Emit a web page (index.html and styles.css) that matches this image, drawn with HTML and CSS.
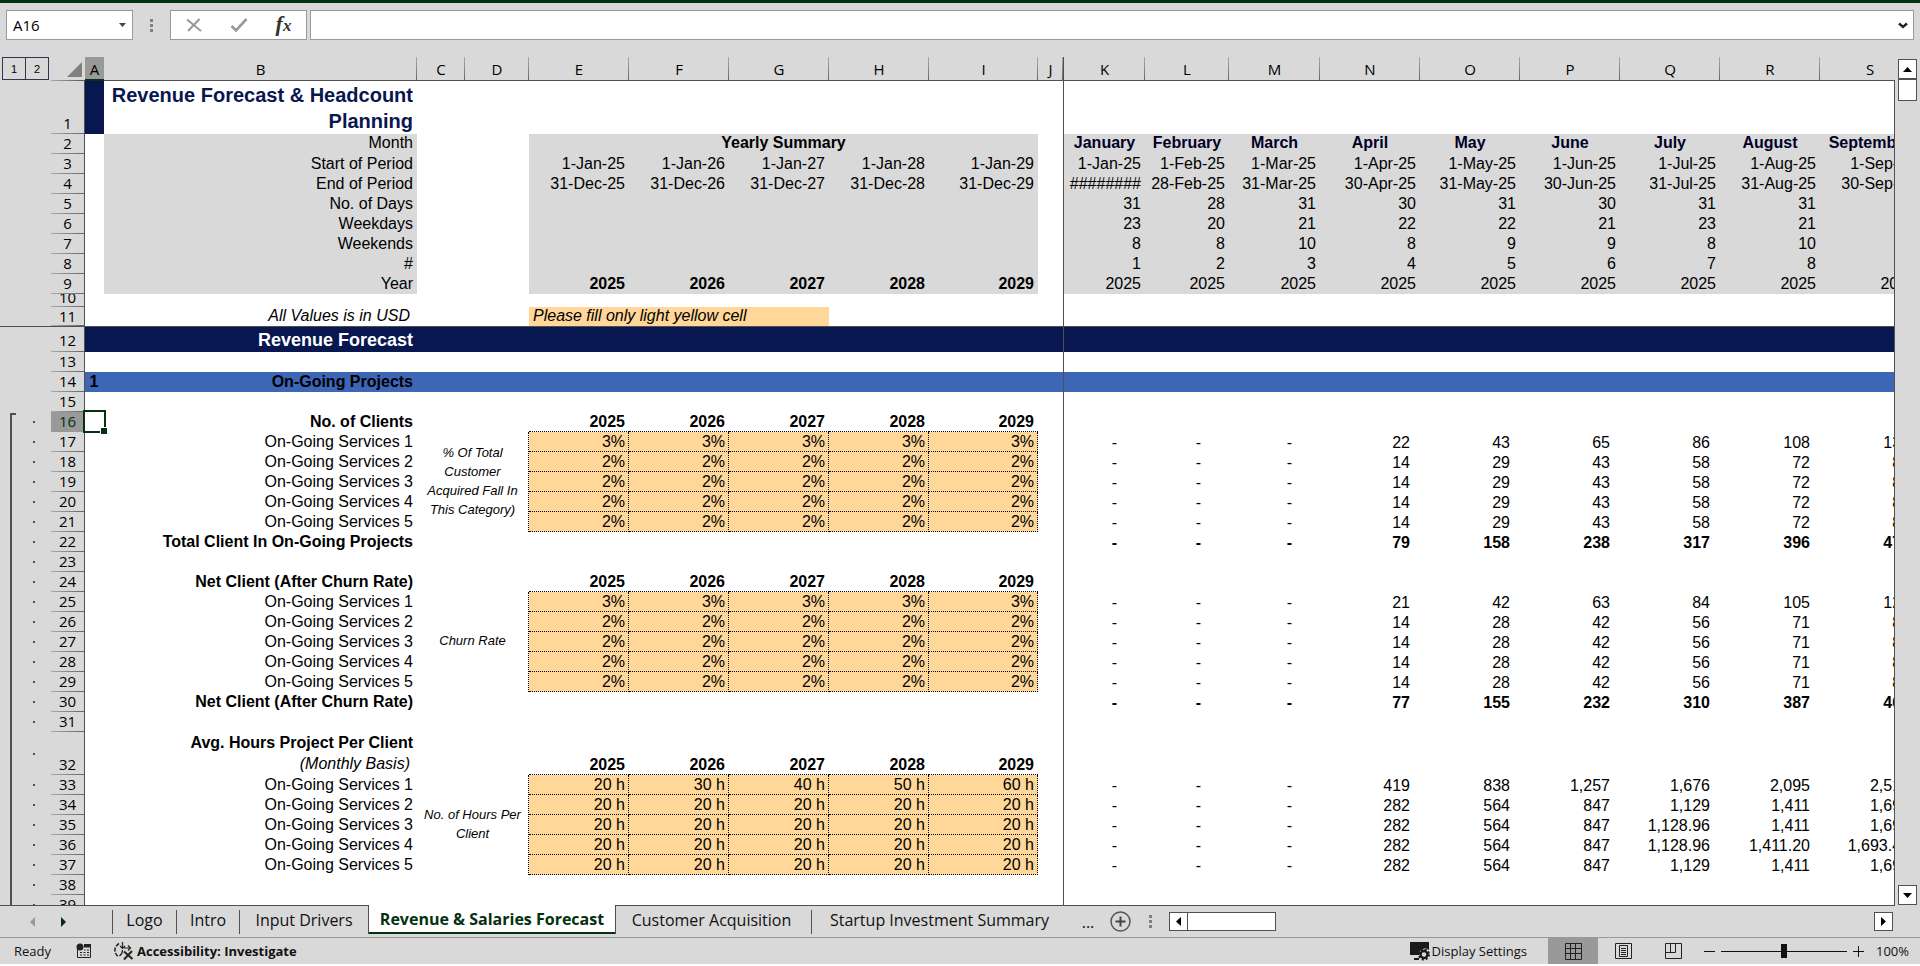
FILE: index.html
```html
<!DOCTYPE html>
<html lang="en">
<head>
<meta charset="utf-8">
<title>Revenue Forecast &amp; Headcount Planning</title>
<link rel="stylesheet" href="styles.css">
</head>
<body>
<div class="titlebar"></div>

<header class="formula-bar">
  <div class="name-box">
    <input type="text" value="A16" aria-label="Name box">
    <button type="button" aria-label="Name list"><svg width="7" height="4"><path d="M0 0h7L3.500 4z" fill="#444"/></svg></button>
  </div>
  <span class="grip"><i></i><i></i><i></i></span>
  <div class="fx-box">
    <button type="button" aria-label="Cancel"><svg width="16" height="14" viewBox="0 0 16 14"><path d="M1 1.500L15 13M13.500 1L2 13" fill="none" stroke="#999" stroke-width="2"/></svg></button>
    <button type="button" aria-label="Enter"><svg width="18" height="14" viewBox="0 0 18 14"><path d="M1.500 8L6 12.500 16.500 1" fill="none" stroke="#999" stroke-width="2.600"/></svg></button>
    <button type="button" class="fx" aria-label="Insert function">f<span>x</span></button>
  </div>
  <div class="formula">
    <input type="text" aria-label="Formula">
    <button type="button" aria-label="Expand formula bar"><svg width="10" height="7" viewBox="0 0 10 7"><path d="M1 1.500L5 5 9 1.500" fill="none" stroke="#222" stroke-width="2.400"/></svg></button>
  </div>
</header>

<main class="workspace">
<div class="grid">
<table class="sheet">
<colgroup>
<col class="w-outline"><col class="w-rownum"><col class="w-a"><col class="w-b"><col class="w-c"><col class="w-d">
<col class="w-std"><col class="w-std"><col class="w-std"><col class="w-std"><col class="w-i"><col class="w-j">
<col class="w-k"><col class="w-l"><col class="w-m"><col class="w-std"><col class="w-std"><col class="w-std"><col class="w-std"><col class="w-std"><col class="w-std">
</colgroup>
<thead>
<tr>
<td class="levels"><div><button type="button">1</button><button type="button">2</button></div></td>
<td class="corner"><svg width="15" height="15"><path d="M15 0v15H0z" fill="#808080"/></svg></td>
<th scope="col" class="current">A</th><th scope="col">B</th><th scope="col">C</th><th scope="col">D</th><th scope="col">E</th><th scope="col">F</th><th scope="col">G</th><th scope="col">H</th><th scope="col">I</th><th scope="col" class="fz">J</th><th scope="col">K</th><th scope="col">L</th><th scope="col">M</th><th scope="col">N</th><th scope="col">O</th><th scope="col">P</th><th scope="col">Q</th><th scope="col">R</th><th scope="col">S</th>
</tr>
</thead>

<tbody class="frozen">
<tr class="title"><td></td><th scope="row">1</th><td class="navy"></td><td>Revenue Forecast &amp; Headcount Planning</td><td colspan="8" class="fz"></td><td colspan="9"></td></tr>
<tr class="meta months"><td></td><th scope="row">2</th><td></td><td>Month</td><td colspan="2"></td><td colspan="5" class="summary">Yearly Summary</td><td class="fz"></td><td>January</td><td>February</td><td>March</td><td>April</td><td>May</td><td>June</td><td>July</td><td>August</td><td>September</td></tr>
<tr class="meta"><td></td><th scope="row">3</th><td></td><td>Start of Period</td><td colspan="2"></td><td>1-Jan-25</td><td>1-Jan-26</td><td>1-Jan-27</td><td>1-Jan-28</td><td>1-Jan-29</td><td class="fz"></td><td>1-Jan-25</td><td>1-Feb-25</td><td>1-Mar-25</td><td>1-Apr-25</td><td>1-May-25</td><td>1-Jun-25</td><td>1-Jul-25</td><td>1-Aug-25</td><td>1-Sep-25</td></tr>
<tr class="meta"><td></td><th scope="row">4</th><td></td><td>End of Period</td><td colspan="2"></td><td>31-Dec-25</td><td>31-Dec-26</td><td>31-Dec-27</td><td>31-Dec-28</td><td>31-Dec-29</td><td class="fz"></td><td>########</td><td>28-Feb-25</td><td>31-Mar-25</td><td>30-Apr-25</td><td>31-May-25</td><td>30-Jun-25</td><td>31-Jul-25</td><td>31-Aug-25</td><td>30-Sep-25</td></tr>
<tr class="meta"><td></td><th scope="row">5</th><td></td><td>No. of Days</td><td colspan="2"></td><td></td><td></td><td></td><td></td><td></td><td class="fz"></td><td>31</td><td>28</td><td>31</td><td>30</td><td>31</td><td>30</td><td>31</td><td>31</td><td></td></tr>
<tr class="meta"><td></td><th scope="row">6</th><td></td><td>Weekdays</td><td colspan="2"></td><td></td><td></td><td></td><td></td><td></td><td class="fz"></td><td>23</td><td>20</td><td>21</td><td>22</td><td>22</td><td>21</td><td>23</td><td>21</td><td></td></tr>
<tr class="meta"><td></td><th scope="row">7</th><td></td><td>Weekends</td><td colspan="2"></td><td></td><td></td><td></td><td></td><td></td><td class="fz"></td><td>8</td><td>8</td><td>10</td><td>8</td><td>9</td><td>9</td><td>8</td><td>10</td><td></td></tr>
<tr class="meta"><td></td><th scope="row">8</th><td></td><td>#</td><td colspan="2"></td><td></td><td></td><td></td><td></td><td></td><td class="fz"></td><td>1</td><td>2</td><td>3</td><td>4</td><td>5</td><td>6</td><td>7</td><td>8</td><td></td></tr>
<tr class="meta year"><td></td><th scope="row">9</th><td></td><td>Year</td><td colspan="2"></td><td>2025</td><td>2026</td><td>2027</td><td>2028</td><td>2029</td><td class="fz"></td><td>2025</td><td>2025</td><td>2025</td><td>2025</td><td>2025</td><td>2025</td><td>2025</td><td>2025</td><td>2025</td></tr>
<tr class="thin"><td></td><th scope="row"><span>10</span></th><td></td><td colspan="9" class="fz"></td><td colspan="9"></td></tr>
<tr class="notice"><td></td><th scope="row">11</th><td></td><td class="italic">All Values is in USD</td><td colspan="2"></td><td colspan="3" class="hint">Please fill only light yellow cell</td><td colspan="3" class="fz"></td><td colspan="9"></td></tr>
</tbody>

<tbody>
<tr class="section"><td></td><th scope="row">12</th><td></td><td>Revenue Forecast</td><td colspan="8" class="fz"></td><td colspan="9"></td></tr>
<tr><td></td><th scope="row">13</th><td></td><td colspan="9" class="fz"></td><td colspan="9"></td></tr>
<tr class="subsection"><td></td><th scope="row">14</th><td>1</td><td>On-Going Projects</td><td colspan="8" class="fz"></td><td colspan="9"></td></tr>
<tr><td></td><th scope="row">15</th><td></td><td colspan="9" class="fz"></td><td colspan="9"></td></tr>
</tbody>

<tbody class="grouped">
<tr class="years first"><td></td><th scope="row" class="current">16</th><td class="selected"><i></i></td><td>No. of Clients</td><td colspan="2"></td><td>2025</td><td>2026</td><td>2027</td><td>2028</td><td>2029</td><td class="fz"></td><td colspan="9"></td></tr>
<tr class="data"><td></td><th scope="row">17</th><td></td><td>On-Going Services 1</td><td class="note" colspan="2" rowspan="5">% Of Total Customer Acquired Fall In This Category)</td><td>3%</td><td>3%</td><td>3%</td><td>3%</td><td>3%</td><td class="fz"></td><td>-</td><td>-</td><td>-</td><td>22</td><td>43</td><td>65</td><td>86</td><td>108</td><td>130</td></tr>
<tr class="data"><td></td><th scope="row">18</th><td></td><td>On-Going Services 2</td><td>2%</td><td>2%</td><td>2%</td><td>2%</td><td>2%</td><td class="fz"></td><td>-</td><td>-</td><td>-</td><td>14</td><td>29</td><td>43</td><td>58</td><td>72</td><td>86</td></tr>
<tr class="data"><td></td><th scope="row">19</th><td></td><td>On-Going Services 3</td><td>2%</td><td>2%</td><td>2%</td><td>2%</td><td>2%</td><td class="fz"></td><td>-</td><td>-</td><td>-</td><td>14</td><td>29</td><td>43</td><td>58</td><td>72</td><td>86</td></tr>
<tr class="data"><td></td><th scope="row">20</th><td></td><td>On-Going Services 4</td><td>2%</td><td>2%</td><td>2%</td><td>2%</td><td>2%</td><td class="fz"></td><td>-</td><td>-</td><td>-</td><td>14</td><td>29</td><td>43</td><td>58</td><td>72</td><td>86</td></tr>
<tr class="data"><td></td><th scope="row">21</th><td></td><td>On-Going Services 5</td><td>2%</td><td>2%</td><td>2%</td><td>2%</td><td>2%</td><td class="fz"></td><td>-</td><td>-</td><td>-</td><td>14</td><td>29</td><td>43</td><td>58</td><td>72</td><td>86</td></tr>
<tr class="total"><td></td><th scope="row">22</th><td></td><td>Total Client In On-Going Projects</td><td colspan="8" class="fz"></td><td>-</td><td>-</td><td>-</td><td>79</td><td>158</td><td>238</td><td>317</td><td>396</td><td>475</td></tr>
<tr><td></td><th scope="row">23</th><td></td><td colspan="9" class="fz"></td><td colspan="9"></td></tr>
<tr class="years"><td></td><th scope="row">24</th><td></td><td>Net Client (After Churn Rate)</td><td colspan="2"></td><td>2025</td><td>2026</td><td>2027</td><td>2028</td><td>2029</td><td class="fz"></td><td colspan="9"></td></tr>
<tr class="data"><td></td><th scope="row">25</th><td></td><td>On-Going Services 1</td><td class="note" colspan="2" rowspan="5">Churn Rate</td><td>3%</td><td>3%</td><td>3%</td><td>3%</td><td>3%</td><td class="fz"></td><td>-</td><td>-</td><td>-</td><td>21</td><td>42</td><td>63</td><td>84</td><td>105</td><td>126</td></tr>
<tr class="data"><td></td><th scope="row">26</th><td></td><td>On-Going Services 2</td><td>2%</td><td>2%</td><td>2%</td><td>2%</td><td>2%</td><td class="fz"></td><td>-</td><td>-</td><td>-</td><td>14</td><td>28</td><td>42</td><td>56</td><td>71</td><td>85</td></tr>
<tr class="data"><td></td><th scope="row">27</th><td></td><td>On-Going Services 3</td><td>2%</td><td>2%</td><td>2%</td><td>2%</td><td>2%</td><td class="fz"></td><td>-</td><td>-</td><td>-</td><td>14</td><td>28</td><td>42</td><td>56</td><td>71</td><td>85</td></tr>
<tr class="data"><td></td><th scope="row">28</th><td></td><td>On-Going Services 4</td><td>2%</td><td>2%</td><td>2%</td><td>2%</td><td>2%</td><td class="fz"></td><td>-</td><td>-</td><td>-</td><td>14</td><td>28</td><td>42</td><td>56</td><td>71</td><td>85</td></tr>
<tr class="data"><td></td><th scope="row">29</th><td></td><td>On-Going Services 5</td><td>2%</td><td>2%</td><td>2%</td><td>2%</td><td>2%</td><td class="fz"></td><td>-</td><td>-</td><td>-</td><td>14</td><td>28</td><td>42</td><td>56</td><td>71</td><td>85</td></tr>
<tr class="total"><td></td><th scope="row">30</th><td></td><td>Net Client (After Churn Rate)</td><td colspan="8" class="fz"></td><td>-</td><td>-</td><td>-</td><td>77</td><td>155</td><td>232</td><td>310</td><td>387</td><td>465</td></tr>
<tr><td></td><th scope="row">31</th><td></td><td colspan="9" class="fz"></td><td colspan="9"></td></tr>
<tr class="years tall"><td></td><th scope="row">32</th><td></td><td>Avg. Hours Project Per Client<br><em>(Monthly Basis)</em></td><td colspan="2"></td><td>2025</td><td>2026</td><td>2027</td><td>2028</td><td>2029</td><td class="fz"></td><td colspan="9"></td></tr>
<tr class="data"><td></td><th scope="row">33</th><td></td><td>On-Going Services 1</td><td class="note" colspan="2" rowspan="5">No. of Hours Per Client</td><td>20 h</td><td>30 h</td><td>40 h</td><td>50 h</td><td>60 h</td><td class="fz"></td><td>-</td><td>-</td><td>-</td><td>419</td><td>838</td><td>1,257</td><td>1,676</td><td>2,095</td><td>2,514</td></tr>
<tr class="data"><td></td><th scope="row">34</th><td></td><td>On-Going Services 2</td><td>20 h</td><td>20 h</td><td>20 h</td><td>20 h</td><td>20 h</td><td class="fz"></td><td>-</td><td>-</td><td>-</td><td>282</td><td>564</td><td>847</td><td>1,129</td><td>1,411</td><td>1,693</td></tr>
<tr class="data"><td></td><th scope="row">35</th><td></td><td>On-Going Services 3</td><td>20 h</td><td>20 h</td><td>20 h</td><td>20 h</td><td>20 h</td><td class="fz"></td><td>-</td><td>-</td><td>-</td><td>282</td><td>564</td><td>847</td><td>1,128.96</td><td>1,411</td><td>1,693</td></tr>
<tr class="data"><td></td><th scope="row">36</th><td></td><td>On-Going Services 4</td><td>20 h</td><td>20 h</td><td>20 h</td><td>20 h</td><td>20 h</td><td class="fz"></td><td>-</td><td>-</td><td>-</td><td>282</td><td>564</td><td>847</td><td>1,128.96</td><td>1,411.20</td><td>1,693.44</td></tr>
<tr class="data"><td></td><th scope="row">37</th><td></td><td>On-Going Services 5</td><td>20 h</td><td>20 h</td><td>20 h</td><td>20 h</td><td>20 h</td><td class="fz"></td><td>-</td><td>-</td><td>-</td><td>282</td><td>564</td><td>847</td><td>1,129</td><td>1,411</td><td>1,693</td></tr>
<tr><td></td><th scope="row">38</th><td></td><td colspan="9" class="fz"></td><td colspan="9"></td></tr>
<tr><td></td><th scope="row">39</th><td></td><td colspan="9" class="fz"></td><td colspan="9"></td></tr>
</tbody>
</table>
</div>

<div class="vscroll">
  <button type="button" aria-label="Scroll up"><svg width="9" height="5"><path d="M4.500 0L9 5H0z"/></svg></button>
  <span class="vthumb"></span>
  <button type="button" class="down" aria-label="Scroll down"><svg width="9" height="5"><path d="M0 0h9L4.500 5z"/></svg></button>
</div>
</main>

<nav class="tabs">
  <div class="tab-arrows">
    <button type="button" aria-label="Previous sheet" disabled><svg width="5" height="10"><path d="M5 0v10L0 5z" fill="#999"/></svg></button>
    <button type="button" aria-label="Next sheet"><svg width="5" height="10"><path d="M0 0v10l5-5z" fill="#032b10"/></svg></button>
  </div>
  <button type="button" class="tab t-logo">Logo</button>
  <button type="button" class="tab t-intro">Intro</button>
  <button type="button" class="tab t-input">Input Drivers</button>
  <button type="button" class="tab active">Revenue &amp; Salaries Forecast</button>
  <button type="button" class="tab t-customer">Customer Acquisition</button>
  <button type="button" class="tab t-startup">Startup Investment Summary</button>
  <button type="button" class="more">...</button>
  <button type="button" class="add" aria-label="New sheet"><svg width="21" height="21" viewBox="0 0 21 21"><circle cx="10.500" cy="10.500" r="9.500" fill="none" stroke="#555" stroke-width="1.500"/><path d="M10.500 5.500v10M5.500 10.500h10" stroke="#444" stroke-width="2"/></svg></button>
  <span class="grip"><i></i><i></i><i></i></span>
  <div class="hscroll">
    <button type="button" aria-label="Scroll left"><svg width="5" height="9"><path d="M5 0v9L0 4.500z"/></svg></button>
    <span class="hthumb"></span>
    <button type="button" class="right" aria-label="Scroll right"><svg width="5" height="9"><path d="M0 0v9l5-4.500z"/></svg></button>
  </div>
</nav>

<footer class="status">
  <span class="ready">Ready</span>
  <button type="button" class="macro" aria-label="Record macro"><svg width="16" height="16" viewBox="0 0 16 16"><path d="M1.500 6V14.500h13V3" fill="none" stroke="#222"/><path d="M8 1h7v3.500H8z" fill="#222"/><circle cx="4" cy="4" r="3.500" fill="#222"/><path d="M4 9.500h2M7.500 9.500h2M11 9.500h2M4 12h2M7.500 12h2M11 12h2M8 7h1.500M11 7h2" stroke="#222"/></svg></button>
  <button type="button" class="access"><svg width="20" height="18" viewBox="0 0 20 18"><path d="M5 1.500C-.5 5-.5 11.500 5 15" fill="none" stroke="#222" stroke-width="1.500" stroke-dasharray="4 1.500"/><path d="M8.500 0v6M6 4l2.500 2.500L11 4M10 6h6M14 3.500L16.500 6 14 8.500M8.500 8c0 3-1 4.500-3 6" fill="none" stroke="#222" stroke-width="1.200"/><path d="M10 9.500l8.500 7.500M18 9L10 17.500" stroke="#222" stroke-width="2"/></svg>Accessibility: Investigate</button>
  <button type="button" class="display"><svg width="20" height="19" viewBox="0 0 20 19"><path d="M0 0h19v8l-4-2-5 3-1 4H0zM4 16h5v2H4z" fill="#1a1a1a"/><circle cx="14" cy="12.500" r="3.500" fill="none" stroke="#1a1a1a" stroke-width="2.400"/><circle cx="14" cy="12.500" r="5" fill="none" stroke="#1a1a1a" stroke-width="2" stroke-dasharray="2 1.930"/></svg>Display Settings</button>
  <div class="views">
    <button type="button" class="on" aria-label="Normal view"><svg width="17" height="17" viewBox="0 0 17 17"><path d="M.5.5h16v16H.5zM5.500.5v16M10.500.5v16M.5 5.500h16M.5 10.500h16" fill="none" stroke="#222"/></svg></button>
    <button type="button" aria-label="Page layout"><svg width="17" height="16" viewBox="0 0 17 16"><path d="M.5.5h16v15H.5zM4.500 2.500h8v11h-8zM6 5.500h5M6 7.500h5M6 9.500h5M6 11.500h5" fill="none" stroke="#222"/></svg></button>
    <button type="button" aria-label="Page break preview"><svg width="17" height="16" viewBox="0 0 17 16"><path d="M.5.5h16v15H.5zM5.500.5v9M10.500.5v9M.5 9.500h10" fill="none" stroke="#222"/></svg></button>
  </div>
  <button type="button" class="step" aria-label="Zoom out"><svg width="11" height="11"><path d="M0 5.500h11" stroke="#111"/></svg></button>
  <input type="range" min="0" max="100" value="50" aria-label="Zoom">
  <button type="button" class="step" aria-label="Zoom in"><svg width="11" height="11"><path d="M0 5.500h11M5.500 0v11" stroke="#111"/></svg></button>
  <span class="percent">100%</span>
</footer>
</body>
</html>
```
FILE: styles.css
```css
* { box-sizing: border-box; }

:root {
  --chrome: #d9d9d9;
  --line: #505050;
  --navy: #08174f;
  --blue: #3d66b6;
  --input: #ffd799;
  --green: #04310f;
}

html, body { height: 100%; }

body {
  margin: 0;
  padding-bottom: 2px;
  display: flex;
  flex-direction: column;
  overflow: hidden;
  background: #fff;
  color: #000;
  font: 15px/18px "Open Sans", sans-serif;
}

button, input { font: inherit; color: inherit; margin: 0; }

button {
  display: inline-flex;
  align-items: center;
  justify-content: center;
  padding: 0;
  border: 0;
  background: none;
}

svg { display: block; flex: none; }

.titlebar { flex: none; height: 3px; background: var(--green); }

/* Formula bar */
.formula-bar {
  flex: none;
  display: flex;
  align-items: center;
  height: 54px;
  padding: 0 6px 10px;
  background: var(--chrome);
}

.name-box, .fx-box, .formula {
  display: flex;
  height: 30px;
  border: 1px solid #999;
  background: #fff;
}

.name-box { width: 127px; }
.name-box input, .formula input {
  flex: 1;
  min-width: 0;
  border: 0;
  padding: 0 6px;
  background: none;
  outline: 0;
}
.name-box button, .formula button { width: 20px; }

.grip { display: flex; flex-direction: column; gap: 2px; }
.grip i { width: 3px; height: 3px; background: #808080; }

.formula-bar .grip { margin: 0 17px; }

.fx-box { width: 137px; align-items: center; justify-content: center; gap: 28px; }
.fx {
  font: italic bold 22px/24px "Liberation Serif", serif;
  color: #333;
  align-items: baseline;
}
.fx span { font-size: 17px; }

.formula { flex: 1; margin-left: 3px; }

/* Sheet */
.workspace { flex: 1; min-height: 0; display: flex; background: var(--chrome); }

.grid {
  flex: 1;
  min-width: 0;
  overflow: hidden;
  border-bottom: 1px solid var(--line);
  background: #fff;
}

.sheet {
  width: 1920px;
  table-layout: fixed;
  border-collapse: separate;
  border-spacing: 0;
  font: 16px/18px "Liberation Sans", Arial, sans-serif;
}

.w-outline { width: 51px; }
.w-rownum { width: 34px; }
.w-a { width: 19px; }
.w-b { width: 313px; }
.w-c { width: 48px; }
.w-d { width: 64px; }
.w-std { width: 100px; }
.w-i { width: 109px; }
.w-j { width: 26px; }
.w-k { width: 81px; }
.w-l { width: 84px; }
.w-m { width: 91px; }

.sheet tr { height: 20px; }
.sheet td, .sheet th { padding: 0 4px 1px; vertical-align: bottom; text-align: right; white-space: nowrap; }

.sheet th, .sheet thead td, .sheet td:first-child { background-color: var(--chrome); }

.sheet th { font: 15px/18px "Open Sans", sans-serif; text-align: center; padding: 0 0 2px; }

.sheet thead tr { height: 24px; }
.sheet thead th {
  border-bottom: 1px solid var(--line);
  background: linear-gradient(#aaa, #666) right top / 1px 100% no-repeat var(--chrome);
}
.sheet thead th.current {
  background: #999;
  border-bottom: 2px solid var(--green);
  padding-bottom: 1px;
}
.sheet thead td { padding: 0; }
.levels div { display: flex; height: 24px; padding: 0 2px 1px; }
.levels button { width: 24px; border: 1px solid #3c3050; font-size: 11px; }
.levels button + button { margin-left: -1px; }
.corner { background: linear-gradient(90deg, #aaa, #555) left bottom / 100% 1px no-repeat; }
.corner svg { margin: 0 3px 4px auto; }

.sheet tbody th {
  border-right: 1px solid var(--line);
  background: linear-gradient(90deg, #aaa, #666) left bottom / 100% 1px no-repeat var(--chrome);
}
.sheet tbody th.current { background: #999; color: var(--green); }

.sheet .fz { border-right: 1px solid var(--line); }

.grouped td:first-child {
  background:
    linear-gradient(#505050, #505050) 33px 50% / 2px 2px no-repeat,
    linear-gradient(#505050, #505050) 10px 0 / 2px 100% no-repeat,
    var(--chrome);
}
.grouped .first td:first-child {
  background:
    linear-gradient(#505050, #505050) 33px 50% / 2px 2px no-repeat,
    linear-gradient(#505050, #505050) 10px 1px / 6px 2px no-repeat,
    linear-gradient(#505050, #505050) 10px 1px / 2px 100% no-repeat,
    var(--chrome);
}

.sheet .title { height: 53px; }
.title td:nth-child(4) {
  font-size: 20px;
  line-height: 26px;
  font-weight: bold;
  color: var(--navy);
  white-space: normal;
  padding-bottom: 0;
}
.navy { background: var(--navy); }

.meta td:nth-child(4),
.meta td:nth-last-child(-n+9),
.meta:not(.months) td:nth-last-child(n+11):nth-last-child(-n+15),
.meta td.summary { background: #d9d9d9; }
.sheet .months td { padding-bottom: 2px; }
.months td:nth-last-child(-n+9) { text-align: center; font-weight: bold; color: #000026; padding: 0 0 2px; }
.sheet .summary { text-align: center; font-weight: bold; }
.year td:nth-last-child(n+11):nth-last-child(-n+15) { font-weight: bold; }

.sheet .thin, .thin td { height: 13px; line-height: 10px; }
.sheet .thin th { padding: 0 0 1px; line-height: 18px; }
.thin span { display: flex; align-items: flex-end; justify-content: center; height: 12px; overflow: hidden; }

.notice td, .notice th { border-bottom: 1px solid var(--line); }
.sheet .notice td, .sheet .notice th { padding-bottom: 1px; }
.sheet .italic { font-style: italic; padding-right: 7px; }
.sheet .hint { text-align: left; font-style: italic; background: var(--input); }

.sheet .section { height: 25px; }
.section td { background: var(--navy); color: #fff; font-size: 18px; line-height: 22px; font-weight: bold; }
.sheet .section th { padding-bottom: 3px; }
.subsection td { background: var(--blue); font-weight: bold; }
.sheet .subsection td:nth-child(3) { text-align: center; padding-left: 3px; }

.sheet .selected { position: relative; }
.selected i {
  position: absolute;
  inset: -2px -2px -1px -2px;
  border: 2px solid var(--green);
}
.selected i::after {
  content: "";
  position: absolute;
  right: -3px;
  bottom: -3px;
  width: 6px;
  height: 6px;
  border: 1px solid #fff;
  border-width: 1px 0 0 1px;
  background: var(--green);
}

.years td, .total td { font-weight: bold; }
.years td:nth-last-child(n+3):nth-last-child(-n+7) { border-bottom: 1px dotted #000; padding-bottom: 0; }
.sheet .tall { height: 43px; }
.tall td:nth-child(4) { line-height: 21px; }
.tall em { font-weight: normal; padding-right: 3px; }

.data td:nth-last-child(n+11):nth-last-child(-n+15) {
  background: var(--input);
  border: 0 dotted #000;
  border-width: 0 1px 1px 0;
  padding: 0 3px 0 0;
}
.data td:nth-last-child(-n+9), .total td:nth-last-child(-n+9) { padding: 0 10px 0 0; }
.data td:nth-last-child(-n+9):nth-last-child(n+7),
.total td:nth-last-child(-n+9):nth-last-child(n+7) { padding-right: 28px; }

.sheet .note {
  border-right: 1px dotted #000;
  vertical-align: middle;
  text-align: center;
  white-space: normal;
  padding-bottom: 3px;
  font-size: 13px;
  line-height: 19px;
  font-style: italic;
}

/* Vertical scroll bar */
.vscroll {
  flex: none;
  width: 26px;
  padding: 2px 3px 1px 4px;
  display: flex;
  flex-direction: column;
  background: linear-gradient(var(--line), var(--line)) 0 23px / 1px 100% no-repeat;
}
.vscroll button, .vthumb { width: 19px; height: 20px; border: 1px solid #505050; background: #fff; }
.vthumb { height: 22px; }
.vscroll .down { margin-top: auto; }

/* Sheet tabs */
.tabs {
  flex: none;
  display: flex;
  align-items: center;
  height: 32px;
  padding-right: 27px;
  border-bottom: 1px solid #999;
  background: var(--chrome);
  font-size: 16px;
  color: #111;
}
.tab-arrows { display: flex; gap: 26px; width: 112px; padding-left: 30px; }
.tab { height: 24px; padding-bottom: 4px; border-left: 1px solid #505050; white-space: nowrap; }
.t-logo { width: 64px; }
.t-intro { width: 63px; }
.t-input { width: 129px; }
.tab.active {
  align-self: flex-start;
  width: 248px;
  height: 29px;
  margin-top: -1px;
  padding-bottom: 2px;
  border: 1px solid #505050;
  border-width: 0 1px;
  box-shadow: inset 0 -2px var(--green);
  background: #fff;
  color: var(--green);
  font-weight: bold;
}
.t-customer { width: 195px; padding-right: 4px; border-left: 0; }
.t-startup { width: 260px; padding-right: 4px; }
.more { width: 34px; }
.add { width: 30px; }
.tabs .grip { margin-left: 14px; }
.hscroll { flex: 1; display: flex; margin-left: 17px; }
.hscroll button, .hthumb { height: 19px; width: 19px; border: 1px solid #505050; background: #fff; }
.hthumb { width: 89px; margin-left: -1px; }
.hscroll .right { margin-left: auto; }

/* Status bar */
.status {
  flex: none;
  display: flex;
  align-items: center;
  height: 26px;
  padding-right: 11px;
  background: var(--chrome);
  font-size: 13px;
  color: #111;
  white-space: nowrap;
}
.ready { width: 62px; margin-left: 14px; }
.access { margin-left: 22px; gap: 3px; font-weight: bold; }
.display { margin-left: auto; gap: 2px; }
.views { display: flex; align-self: stretch; margin-left: 21px; }
.views button { width: 50px; }
.views .on { background: #999; }
.step { margin: 0 6px; width: 11px; }

.status input[type="range"] {
  appearance: none;
  width: 126px;
  height: 14px;
  background: linear-gradient(#111, #111) 0 50% / 100% 1px no-repeat;
}
.status input[type="range"]::-webkit-slider-thumb {
  appearance: none;
  width: 6px;
  height: 14px;
  background: #111;
}
.percent { margin-left: 5px; width: 34px; text-align: right; }
```
